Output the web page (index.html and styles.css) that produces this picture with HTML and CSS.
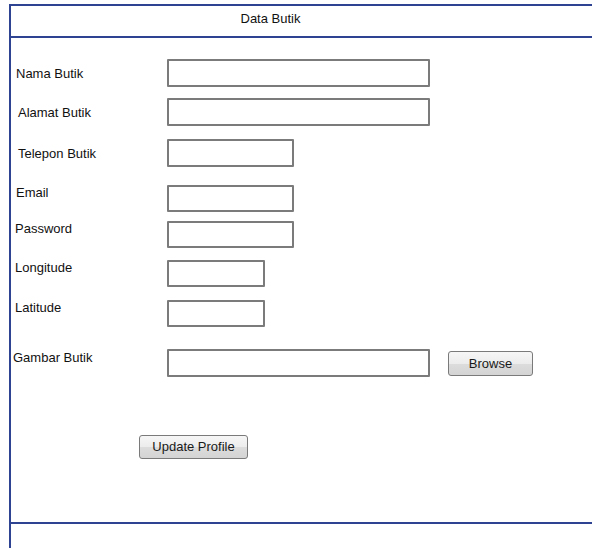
FILE: index.html
```html
<!DOCTYPE html>
<html lang="id">
<head>
<meta charset="utf-8">
<title>Data Butik</title>
<link rel="stylesheet" href="styles.css">
</head>
<body>
<div class="frame">
  <div class="title">Data Butik</div>
  <div class="panel">
    <form class="form">
      <div class="row row-mid">
        <label class="label">Nama Butik</label>
        <div class="field field-long"></div>
      </div>
      <div class="row row-mid">
        <label class="label label-in">Alamat Butik</label>
        <div class="field field-long"></div>
      </div>
      <div class="row row-mid row-sp2">
        <label class="label label-in">Telepon Butik</label>
        <div class="field field-mid"></div>
      </div>
      <div class="row row-sp7">
        <label class="label">Email</label>
        <div class="field field-mid field-thin"></div>
      </div>
      <div class="row row-sp-2">
        <label class="label label-out">Password</label>
        <div class="field field-mid field-thin"></div>
      </div>
      <div class="row row-sp1">
        <label class="label label-out">Longitude</label>
        <div class="field field-short field-thin"></div>
      </div>
      <div class="row row-sp2">
        <label class="label label-out">Latitude</label>
        <div class="field field-short field-thin"></div>
      </div>
      <div class="row row-sp11">
        <label class="label label-far">Gambar Butik</label>
        <div class="field field-long"></div>
        <button type="button" class="btn btn-browse">Browse</button>
      </div>
      <div class="actions">
        <button type="button" class="btn btn-update">Update Profile</button>
      </div>
    </form>
  </div>
</div>
</body>
</html>
```

FILE: styles.css
```css
html, body {
  margin: 0;
  padding: 0;
  background: #ffffff;
}

body {
  font-family: "Liberation Sans", Arial, sans-serif;
  font-size: 13px;
  color: #111111;
  overflow: hidden;
}

.frame {
  margin: 4px 0 0 9px;
  height: 544px;
  border-left: 2px solid #2f4393;
  box-sizing: border-box;
}

.title {
  border-top: 2px solid #2f4393;
  border-bottom: 2px solid #2f4393;
  height: 34px;
  box-sizing: border-box;
  padding: 5px 62px 0 0;
  text-align: center;
  font-size: 13px;
  line-height: 15px;
}

.panel {
  height: 486px;
  border-bottom: 2px solid #2f4393;
  box-sizing: border-box;
}

.form {
  margin: 0;
  padding-top: 21px;
  display: flex;
  flex-direction: column;
  gap: 11px;
}

.row {
  display: flex;
  align-items: flex-start;
}

.row-mid {
  align-items: center;
}

.row-sp2 { margin-top: 2px; }
.row-sp7 { margin-top: 7px; }
.row-sp-2 { margin-top: -2px; }
.row-sp1 { margin-top: 1px; }
.row-sp11 { margin-top: 11px; }

.label {
  width: 156px;
  flex: none;
  box-sizing: border-box;
  padding-left: 5px;
  line-height: 15px;
  white-space: nowrap;
}

.label-in { padding-left: 7px; }
.label-out { padding-left: 4px; }
.label-far { padding-left: 2px; padding-top: 1px; }

.field {
  flex: none;
  height: 28px;
  box-sizing: border-box;
  border: 2px solid #7b7b7b;
  border-radius: 1px;
  background: #ffffff;
}

.field-thin { height: 27px; }
.field-long { width: 263px; }
.field-mid { width: 127px; }
.field-short { width: 98px; }

.btn {
  font-family: "Liberation Sans", Arial, sans-serif;
  font-size: 13px;
  color: #1a1a1a;
  border: 1px solid #7a7a7a;
  border-radius: 3px;
  background: linear-gradient(#f6f6f6 0%, #ececec 50%, #dcdcdc 51%, #d4d4d4 100%);
  padding: 0;
  box-sizing: border-box;
  line-height: 20px;
}

.btn-browse {
  margin: 2px 0 0 18px;
  width: 85px;
  height: 25px;
}

.actions {
  padding: 47px 0 0 128px;
}

.btn-update {
  width: 109px;
  height: 24px;
}
```
